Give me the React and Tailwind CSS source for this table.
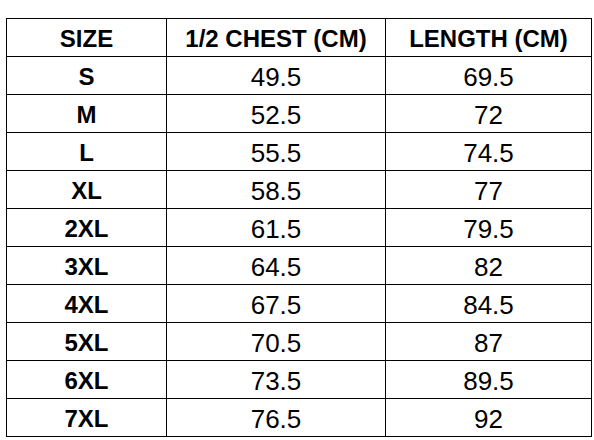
import React from 'react';

const rows = [
  ['S', '49.5', '69.5'],
  ['M', '52.5', '72'],
  ['L', '55.5', '74.5'],
  ['XL', '58.5', '77'],
  ['2XL', '61.5', '79.5'],
  ['3XL', '64.5', '82'],
  ['4XL', '67.5', '84.5'],
  ['5XL', '70.5', '87'],
  ['6XL', '73.5', '89.5'],
  ['7XL', '76.5', '92'],
];

const headers = ['SIZE', '1/2 CHEST (CM)', 'LENGTH (CM)'];

const App = () => {
  return (
    <div className="w-[594px] h-[440px] bg-white pt-[18px] pl-[6px] font-['Liberation_Sans',Arial,sans-serif] text-black">
      <div className="inline-grid grid-cols-[159px_218px_205px] auto-rows-[37px] gap-px p-px bg-black">
        {headers.map((h) => (
          <div key={h} className="bg-white flex items-center justify-center pt-[2px] text-[24px] font-bold leading-none">
            {h}
          </div>
        ))}
        {rows.map(([size, chest, length]) => (
          <React.Fragment key={size}>
            <div className="bg-white flex items-center justify-center pt-[2px] text-[24px] font-bold leading-none">
              {size}
            </div>
            <div className="bg-white flex items-center justify-center pt-[2px] text-[26px] leading-none">
              {chest}
            </div>
            <div className="bg-white flex items-center justify-center pt-[2px] text-[26px] leading-none">
              {length}
            </div>
          </React.Fragment>
        ))}
      </div>
    </div>
  );
};

export default App;
